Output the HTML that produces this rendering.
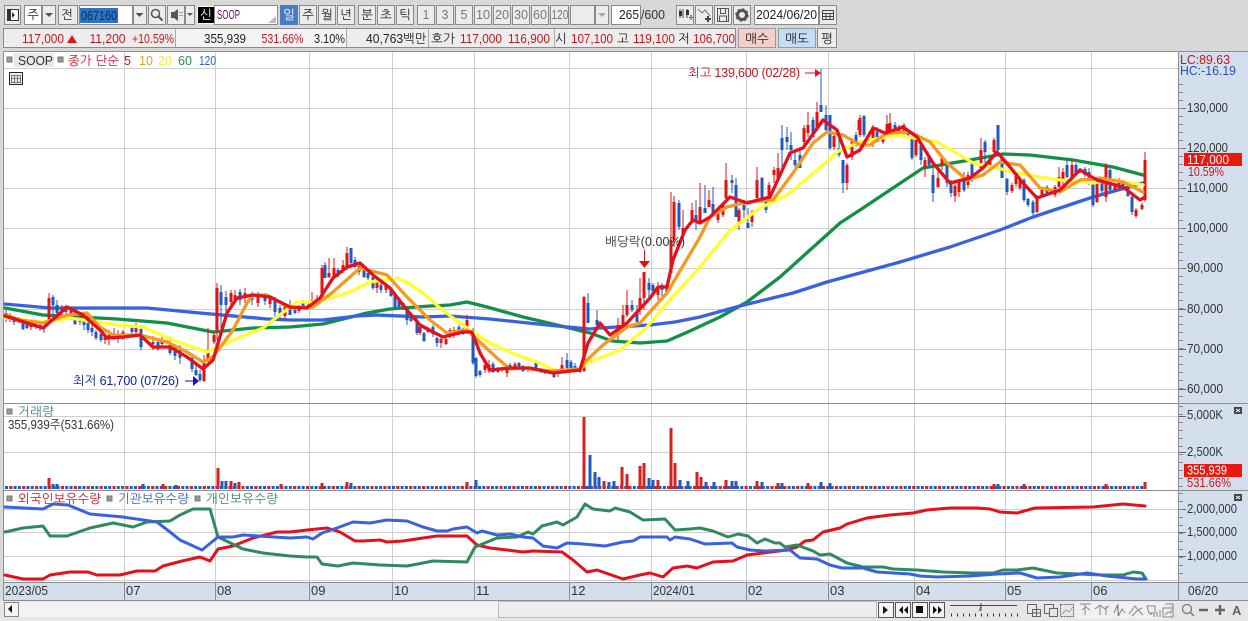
<!DOCTYPE html>
<html><head><meta charset="utf-8"><style>
html,body{margin:0;padding:0;background:#d8d8d8;width:1248px;height:621px;overflow:hidden}
svg{display:block}
text{font-family:"Liberation Sans","NanumGothic",sans-serif;font-size:12.5px;fill:#222}
.c{text-anchor:middle}
.r{fill:#c8161d}.b{fill:#2a50b0}
.ax{fill:#333;font-size:13px}
.btn{fill:#ececec;stroke:#8a8a8a;stroke-width:1}
.ma{fill:none;stroke-linejoin:round;stroke-linecap:round}
</style></head><body>
<svg width="1248" height="621" viewBox="0 0 1248 621" xmlns="http://www.w3.org/2000/svg">
<rect width="1248" height="621" fill="#d8d8d8"/>
<!-- toolbar row 1 -->
<rect class="btn" x="4.500" y="5.500" width="16" height="19"/><rect x="7.500" y="9.500" width="11" height="11" fill="#fff" stroke="#333"/><path d="M7 9h4v12H7zM12 12l3 3-3 3z" fill="#333"/>
<rect x="24.500" y="5.500" width="17" height="19" fill="#fff" stroke="#8a8a8a"/><text class="c" x="33" y="19">주</text>
<rect class="btn" x="42.500" y="5.500" width="13" height="19"/><path d="M45 13h8l-4 4z" fill="#555"/>
<rect class="btn" x="58.500" y="5.500" width="19" height="19"/><text class="c" x="67" y="19">전</text>
<rect x="79.500" y="5.500" width="53" height="19" fill="#fff" stroke="#8a8a8a"/><rect x="80" y="8" width="38" height="15" fill="#2f73c0"/><text x="81" y="20" style="fill:#0b2d60" textLength="36" lengthAdjust="spacingAndGlyphs">067160</text>
<rect class="btn" x="133.500" y="5.500" width="13" height="19"/><path d="M135.500 13h8l-4 4z" fill="#555"/>
<rect class="btn" x="148.500" y="5.500" width="17" height="19"/><circle cx="155.500" cy="13.500" r="4" fill="none" stroke="#555" stroke-width="1.500"/><path d="M158.500 16.500l4 4" stroke="#555" stroke-width="2"/>
<rect class="btn" x="167.500" y="5.500" width="17" height="19"/><path d="M171 12h3l4-3v12l-4-3h-3z" fill="#555"/><path d="M180 12v1M180 15v1M182 12v1M182 15v1" stroke="#555"/>
<rect class="btn" x="185.500" y="5.500" width="9" height="19"/><path d="M187 13h6l-3 3z" fill="#555"/>
<rect x="197" y="6" width="17" height="18" fill="#fff"/><rect x="198" y="7" width="16" height="16" fill="#000"/><text class="c" x="206" y="19" style="fill:#fff">신</text>
<rect x="214.500" y="5.500" width="63" height="19" fill="#fff" stroke="#8a8a8a"/><text x="217" y="19" style="fill:#5a1060" textLength="23" lengthAdjust="spacingAndGlyphs">SOOP</text><path d="M276 23h-8l8-7z" fill="#bbb"/>
<rect x="280" y="5" width="18" height="20" fill="#4a7dc0"/><text class="c" x="289" y="19" style="fill:#fff">일</text>
<g class="btns">
<rect class="btn" x="299.500" y="5.500" width="17" height="19"/><text class="c" x="308" y="19">주</text>
<rect class="btn" x="318.500" y="5.500" width="17" height="19"/><text class="c" x="327" y="19">월</text>
<rect class="btn" x="337.500" y="5.500" width="17" height="19"/><text class="c" x="346" y="19">년</text>
<rect class="btn" x="358.500" y="5.500" width="17" height="19"/><text class="c" x="367" y="19">분</text>
<rect class="btn" x="377.500" y="5.500" width="17" height="19"/><text class="c" x="386" y="19">초</text>
<rect class="btn" x="396.500" y="5.500" width="17" height="19"/><text class="c" x="405" y="19">틱</text>
<rect class="btn" x="417.500" y="5.500" width="17" height="19"/><text class="c" x="426" y="19" style="fill:#777">1</text>
<rect class="btn" x="436.500" y="5.500" width="17" height="19"/><text class="c" x="445" y="19" style="fill:#777">3</text>
<rect class="btn" x="455.500" y="5.500" width="17" height="19"/><text class="c" x="464" y="19" style="fill:#777">5</text>
<rect class="btn" x="474.500" y="5.500" width="17" height="19"/><text x="476" y="19" style="fill:#777" textLength="14" lengthAdjust="spacingAndGlyphs">10</text>
<rect class="btn" x="493.500" y="5.500" width="17" height="19"/><text x="495" y="19" style="fill:#777" textLength="14" lengthAdjust="spacingAndGlyphs">20</text>
<rect class="btn" x="512.500" y="5.500" width="17" height="19"/><text x="514" y="19" style="fill:#777" textLength="14" lengthAdjust="spacingAndGlyphs">30</text>
<rect class="btn" x="531.500" y="5.500" width="17" height="19"/><text x="533" y="19" style="fill:#777" textLength="14" lengthAdjust="spacingAndGlyphs">60</text>
<rect class="btn" x="550.500" y="5.500" width="18" height="19"/><text x="551.500" y="19" style="fill:#777" textLength="17" lengthAdjust="spacingAndGlyphs">120</text>
<rect class="btn" x="570.500" y="5.500" width="24" height="19"/>
<rect class="btn" x="595.500" y="5.500" width="13" height="19"/><path d="M598 13h8l-4 4z" fill="#aaa"/>
</g>
<rect x="611.500" y="5.500" width="29" height="19" fill="#fff" stroke="#8a8a8a"/><text x="619" y="19" textLength="20" lengthAdjust="spacingAndGlyphs">265</text><text x="641" y="19" style="fill:#333" textLength="24" lengthAdjust="spacingAndGlyphs">/600</text>
<rect class="btn" x="676.500" y="5.500" width="17" height="19"/><path d="M680 9v9M683 9v9M687 9v9" stroke="#444"/><path d="M679 11h3v5h-3zM686 10h3v5h-3zM689 17h4v1h-4zM690.500 15v5h1v-5z" fill="#333"/>
<rect class="btn" x="695.500" y="5.500" width="17" height="19"/><path d="M698 9l4 4 3-3 5 6" fill="none" stroke="#777"/><path d="M705 18h6v2h-6zM707 16h2v6h-2z" fill="#444"/>
<rect class="btn" x="714.500" y="5.500" width="17" height="19"/><path d="M717.500 8.500h11v13h-11zM720.500 8.500v5h5v-5M719.500 21v-5h7v5" fill="none" stroke="#555"/>
<rect class="btn" x="733.500" y="5.500" width="17" height="19"/><circle cx="742" cy="15" r="4.500" fill="none" stroke="#555" stroke-width="3"/><circle cx="742" cy="15" r="6" fill="none" stroke="#555" stroke-width="1.500" stroke-dasharray="2.300 2.400"/>
<rect x="754.500" y="5.500" width="64" height="19" fill="#fff" stroke="#8a8a8a"/><text x="756" y="19" textLength="61" lengthAdjust="spacingAndGlyphs">2024/06/20</text>
<rect class="btn" x="819.500" y="5.500" width="17" height="19"/><path d="M822.500 10.500h11v9h-11zM822.500 13.500h11M826 13.500v6M830 13.500v6M822.500 16.500h11" fill="none" stroke="#444"/>
<!-- toolbar row 2 -->
<rect x="3.500" y="28.500" width="732" height="19" fill="#ededed" stroke="#8a8a8a"/>
<rect x="176" y="29" width="171" height="18" fill="#f4f4f4"/><path d="M175.500 29v18M346.500 29v18M428.500 29v18M554.500 29v18" stroke="#aaa"/>
<text x="22" y="43" class="r" textLength="42" lengthAdjust="spacingAndGlyphs">117,000</text><path d="M67 43l5-8 5 8z" fill="#d81818"/>
<text x="89.500" y="43" class="r" textLength="36" lengthAdjust="spacingAndGlyphs">11,200</text><text x="132" y="43" class="r" textLength="42" lengthAdjust="spacingAndGlyphs">+10.59%</text>
<text x="204" y="43" textLength="42" lengthAdjust="spacingAndGlyphs">355,939</text><text x="261.500" y="43" class="r" textLength="42" lengthAdjust="spacingAndGlyphs">531.66%</text><text x="314" y="43" textLength="31" lengthAdjust="spacingAndGlyphs">3.10%</text>
<text x="366" y="43" textLength="60" lengthAdjust="spacingAndGlyphs">40,763백만</text>
<text x="431" y="43" textLength="24" lengthAdjust="spacingAndGlyphs">호가</text><text x="460" y="43" class="r" textLength="42" lengthAdjust="spacingAndGlyphs">117,000</text><text x="508" y="43" class="r" textLength="42" lengthAdjust="spacingAndGlyphs">116,900</text>
<text x="555" y="43">시</text><text x="571" y="43" class="r" textLength="42" lengthAdjust="spacingAndGlyphs">107,100</text><text x="617" y="43">고</text><text x="633" y="43" class="r" textLength="42" lengthAdjust="spacingAndGlyphs">119,100</text><text x="678" y="43">저</text><text x="693" y="43" class="r" textLength="42" lengthAdjust="spacingAndGlyphs">106,700</text>
<rect x="738.500" y="28.500" width="37" height="19" fill="#f4d0cc" stroke="#999"/><text class="c" x="757" y="43">매수</text>
<rect x="778.500" y="28.500" width="37" height="19" fill="#c5dcf5" stroke="#999"/><text class="c" x="797" y="43">매도</text>
<rect class="btn" x="817.500" y="28.500" width="19" height="19"/><text class="c" x="827" y="43">평</text>

<!-- chart frame -->
<rect x="3" y="51" width="1245" height="550" fill="#fff"/>
<rect x="1179" y="52" width="69" height="531" fill="#d4dfee"/>
<rect x="3" y="583" width="1245" height="18" fill="#d4dfee"/>
<!-- grid -->
<path fill="none" stroke="#cfcfcf" d="M4 68.500H1179M4 108.500H1179M4 148.500H1179M4 188.500H1179M4 228.500H1179M4 268.500H1179M4 309.500H1179M4 349.500H1179M4 389.500H1179M4 416.500H1179M4 452.500H1179M4 509.500H1179M4 532.500H1179M4 556.500H1179M4 580.500H1179M124.500 52V583M215.500 52V583M309.500 52V583M392.500 52V583M474.500 52V583M569.500 52V583M651.500 52V583M746.500 52V583M828.500 52V583M914.500 52V583M1005.500 52V583M1091.500 52V583"/>
<path fill="none" stroke="#8e8e8e" d="M3.500 51V601M3 51.500H1248M3 403.500H1248M3 490.500H1248M3 582.500H1248M3 600.500H1248M1178.500 51V601"/>
<path fill="none" stroke="#8e8e8e" d="M124.500 583V601M215.500 583V601M309.500 583V601M392.500 583V601M474.500 583V601M569.500 583V601M651.500 583V601M746.500 583V601M828.500 583V601M914.500 583V601M1005.500 583V601M1091.500 583V601"/>
<!-- axis ticks -->
<path fill="none" stroke="#666" d="M1179 108.500h7M1179 148.500h7M1179 188.500h7M1179 228.500h7M1179 268.500h7M1179 309.500h7M1179 349.500h7M1179 389.500h7M1179 416.500h7M1179 452.500h7M1179 509.500h7M1179 532.500h7M1179 556.500h7"/>
<path fill="none" stroke="#888" stroke-dasharray="1 7" d="M1181 84V403M1181 406V489M1181 493V581" stroke-width="4"/>
<!-- axis labels -->
<text class="ax" x="1187" y="112" textLength="41" lengthAdjust="spacingAndGlyphs">130,000</text><text class="ax" x="1187" y="152" textLength="41" lengthAdjust="spacingAndGlyphs">120,000</text><text class="ax" x="1187" y="192" textLength="41" lengthAdjust="spacingAndGlyphs">110,000</text><text class="ax" x="1187" y="232" textLength="41" lengthAdjust="spacingAndGlyphs">100,000</text><text class="ax" x="1187" y="272" textLength="36" lengthAdjust="spacingAndGlyphs">90,000</text><text class="ax" x="1187" y="313" textLength="36" lengthAdjust="spacingAndGlyphs">80,000</text><text class="ax" x="1187" y="353" textLength="36" lengthAdjust="spacingAndGlyphs">70,000</text><text class="ax" x="1187" y="393" textLength="36" lengthAdjust="spacingAndGlyphs">60,000</text>
<text x="1180" y="64" class="r" textLength="50" lengthAdjust="spacingAndGlyphs">LC:89.63</text><text x="1180" y="75" class="b" textLength="56" lengthAdjust="spacingAndGlyphs">HC:-16.19</text>
<rect x="1184" y="153" width="58" height="13" fill="#e81a10"/><text x="1187" y="164" style="fill:#fff" textLength="42" lengthAdjust="spacingAndGlyphs">117,000</text><text x="1188" y="176" class="r" textLength="36" lengthAdjust="spacingAndGlyphs">10.59%</text>
<text class="ax" x="1187" y="419" textLength="36" lengthAdjust="spacingAndGlyphs">5,000K</text><text class="ax" x="1187" y="456" textLength="36" lengthAdjust="spacingAndGlyphs">2,500K</text>
<rect x="1184" y="464" width="58" height="13" fill="#e81a10"/><text x="1187" y="474.500" style="fill:#fff" textLength="40" lengthAdjust="spacingAndGlyphs">355,939</text><text x="1187" y="487" class="r" textLength="44" lengthAdjust="spacingAndGlyphs">531.66%</text>
<text class="ax" x="1187" y="513" textLength="50" lengthAdjust="spacingAndGlyphs">2,000,000</text><text class="ax" x="1187" y="536" textLength="50" lengthAdjust="spacingAndGlyphs">1,500,000</text><text class="ax" x="1187" y="560" textLength="50" lengthAdjust="spacingAndGlyphs">1,000,000</text>
<rect x="1234" y="407" width="8" height="7" fill="#444"/><path d="M1236 409l4 3M1240 409l-4 3" stroke="#fff"/>
<rect x="1234" y="494" width="8" height="7" fill="#444"/><path d="M1236 496l4 3M1240 496l-4 3" stroke="#fff"/>
<!-- time labels -->
<g style="fill:#333"><text class="ax" x="5" y="595" textLength="43" lengthAdjust="spacingAndGlyphs">2023/05</text><text class="ax" x="126" y="595">07</text><text class="ax" x="217" y="595">08</text><text class="ax" x="311" y="595">09</text><text class="ax" x="394" y="595">10</text><text class="ax" x="476" y="595">11</text><text class="ax" x="571" y="595">12</text><text class="ax" x="653" y="595" textLength="42" lengthAdjust="spacingAndGlyphs">2024/01</text><text class="ax" x="748" y="595">02</text><text class="ax" x="830" y="595">03</text><text class="ax" x="916" y="595">04</text><text class="ax" x="1007" y="595">05</text><text class="ax" x="1093" y="595">06</text><text class="ax" x="1188" y="595" textLength="30" lengthAdjust="spacingAndGlyphs">06/20</text></g>
<!-- legend -->
<rect x="7" y="57" width="5" height="5" fill="#999" stroke="#777"/><rect x="14" y="53" width="40" height="14" fill="#e9e9e9"/><text x="18" y="65" style="fill:#333" textLength="35" lengthAdjust="spacingAndGlyphs">SOOP</text><rect x="58" y="57" width="5" height="5" fill="#999" stroke="#777"/>
<text x="68" y="65" style="fill:#d01020" textLength="51">종가 단순</text><text x="124" y="65" style="fill:#d01020">5</text><text x="139" y="65" style="fill:#e0a030">10</text><text x="158" y="65" style="fill:#f0f040">20</text><text x="178" y="65" style="fill:#2f8a50">60</text><text x="199" y="65" style="fill:#3060c0" textLength="17" lengthAdjust="spacingAndGlyphs">120</text>
<rect x="9.500" y="72.500" width="13" height="12" fill="#eee" stroke="#222"/><path d="M11.500 75.500h9v7h-9zM14.500 75.500v7M17.500 75.500v7M11.500 78.500h9" fill="none" stroke="#777"/>
<rect x="7" y="409" width="5" height="5" fill="#999" stroke="#777"/><text x="18" y="416" style="fill:#2f8a80" textLength="36">거래량</text><text x="8" y="429" style="fill:#333" textLength="106" lengthAdjust="spacingAndGlyphs">355,939주(531.66%)</text>
<rect x="7" y="496" width="5" height="5" fill="#999" stroke="#777"/><text x="18" y="503" style="fill:#d01020" textLength="83">외국인보유수량</text><rect x="107" y="496" width="5" height="5" fill="#999" stroke="#777"/><text x="118" y="503" style="fill:#3060c0" textLength="71">기관보유수량</text><rect x="195" y="496" width="5" height="5" fill="#999" stroke="#777"/><text x="206" y="503" style="fill:#2f8a60" textLength="72">개인보유수량</text>

<!-- MA 120/60 under candles -->
<polyline class="ma" stroke="#129048" stroke-width="3.300" points="5,308 43,315 117,319 167,323 213,332 253,328 290,327 323,324 367,313 390,309 430,306 450,305 467,302 487,307 523,317 557,325 590,333 612,341 640,343 667,341 690,331 720,317 747,302 780,277 810,250 840,223 860,210 893,188 923,168 970,160 1003,154 1030,155 1073,160 1113,167 1143,175"/>
<polyline class="ma" stroke="#3a62e0" stroke-width="3.300" points="5,304 50,308 100,308 147,308 200,313 267,319 290,320 323,320 357,316 377,315 423,317 450,316 490,319 557,326 590,329 600,328 650,325 675,322 700,317 740,306 793,293 827,282 860,273 900,262 950,247 1000,230 1033,217 1093,197 1143,183"/>
<!-- candles -->
<path fill="none" stroke="#e01414" stroke-width="1" d="M10 313V322M19 317V323M31 322V330M49 293V323M62 305V315M71 307V320M105 335V344M109 330V345M114 328V340M123 330V340M136 323V337M153 336V350M162 335V347M204 355V382M208 328V362M214 332V344M217 283V340M231 290V305M235 290V302M245 288V303M258 292V307M270 296V308M285 303V320M299 305V313M308 302V309M312 292V308M317 295V303M322 265V298M329 258V278M334 258V278M343 260V273M347 247V270M359 263V275M377 280V293M386 283V293M403 302V310M420 325V335M441 337V348M446 337V345M450 328V338M454 327V338M467 315V333M485 362V373M489 360V373M502 367V372M507 367V377M515 362V368M528 367V372M532 367V371M558 372V377M562 357V373M584 296V372M618 318V340M623 305V330M627 290V317M640 278V315M644 272V310M658 282V300M671 192V273M674 196V247M683 210V237M692 203V223M700 183V220M709 190V207M718 208V223M723 202V217M726 163V200M739 208V230M752 210V227M757 167V200M769 182V203M774 167V183M778 153V183M804 125V147M808 112V137M817 102V130M834 133V150M847 163V190M852 138V160M859 118V133M860 115V137M873 125V147M883 133V144M887 115V138M890 113V138M899 125V133M904 123V135M916 137V157M925 157V177M938 165V188M942 157V170M955 183V202M959 180V197M968 172V188M981 138V170M990 157V170M994 138V157M1012 183V193M1016 173V187M1020 177V190M1037 195V213M1042 188V198M1055 185V197M1059 167V188M1063 168V185M1072 160V182M1080 168V173M1097 178V203M1106 163V202M1115 183V192M1119 178V190M1136 208V218M1142 203V210M1145 152V202"/>
<path fill="none" stroke="#e01414" stroke-width="3" d="M10 315V318M19 319V320M31 325V327M49 298V323M62 309V312M71 310V316M105 337V340M109 335V338M114 334V337M123 332V337M136 327V332M153 342V344M162 340V344M204 360V381M208 350V360M214 335V342M217 288V330M231 293V302M235 295V300M245 293V297M258 294V303M270 297V304M285 305V316M299 307V311M308 305V308M312 300V303M322 268V297M329 273V277M334 268V277M343 265V270M347 253V268M359 266V272M377 282V288M386 285V290M403 303V307M420 327V333M441 339V343M446 339V344M450 330V337M454 330V334M467 320V330M485 365V370M489 365V371M507 369V373M515 364V367M562 365V372M584 297V371M618 325V335M623 315V327M627 305V315M640 298V310M644 272V298M658 288V295M671 240V273M674 202V240M683 228V235M692 210V220M700 207V223M709 200V207M718 210V220M723 205V215M726 180V198M739 210V222M752 212V222M757 180V198M769 185V200M774 170V175M778 168V180M804 128V142M808 125V133M817 112V128M834 136V147M847 165V183M852 140V157M859 120V130M860 118V135M873 127V140M883 135V142M887 124V138M890 123V133M899 127V132M904 125V132M916 139V155M925 160V168M938 178V187M942 158V165M955 186V196M959 182V192M968 175V185M981 150V168M990 160V168M994 140V152M1012 185V191M1016 176V184M1020 180V188M1037 197V212M1042 190V196M1055 187V195M1059 177V187M1063 172V182M1072 165V180M1097 180V202M1106 165V197M1115 185V190M1119 180V188M1136 210V216M1142 205V209M1145 160V200"/>
<path fill="none" stroke="#1f5ac0" stroke-width="1" d="M6 310V322M14 316V325M23 319V330M27 320V329M36 323V329M40 324V331M44 325V333M53 295V318M57 300V317M66 305V318M75 310V325M80 316V325M84 320V330M88 322V333M92 325V336M96 330V340M101 332V342M118 330V343M132 325V334M141 325V350M158 340V351M170 340V355M175 345V360M180 345V364M192 355V372M196 365V376M200 370V382M221 285V330M226 291V315M240 289V305M252 292V305M265 293V305M275 297V320M280 305V318M290 300V315M295 308V314M303 300V309M325 262V278M338 268V277M351 248V268M355 257V268M364 267V278M368 272V280M373 275V290M381 283V293M391 288V297M395 293V308M399 297V308M407 308V325M411 315V322M417 318V335M424 332V342M428 327V333M433 325V337M437 337V347M459 325V335M463 328V335M473 328V365M476 357V378M480 370V377M493 362V373M498 367V373M510 363V370M519 362V368M523 365V372M536 362V371M541 368V373M545 370V374M550 370V373M554 372V378M567 353V370M571 360V370M575 363V372M580 365V373M588 293V323M597 310V330M632 300V312M637 305V322M649 278V298M653 283V295M662 283V300M667 280V295M679 200V230M696 200V230M705 185V213M713 187V215M732 175V193M736 178V217M744 200V220M748 208V228M762 177V203M766 197V213M782 125V167M787 127V150M791 132V160M795 150V167M800 147V168M813 117V137M821 69V112M826 105V132M830 115V150M839 137V157M843 160V193M856 132V147M864 115V137M877 127V142M895 122V137M908 130V138M912 137V160M921 142V165M929 155V168M933 167V202M947 162V187M951 180V197M964 172V192M972 162V182M985 140V163M998 125V153M1002 157V178M1007 178V195M1024 178V202M1028 198V207M1033 200V215M1047 185V195M1067 158V178M1076 163V175M1085 167V177M1089 168V185M1093 180V207M1102 180V193M1110 168V193M1123 182V190M1128 185V197M1132 195V215"/>
<path fill="none" stroke="#1f5ac0" stroke-width="3" d="M6 313V318M14 317V322M23 320V329M27 322V328M36 325V327M40 325V328M44 326V329M53 297V305M57 305V313M66 306V312M75 313V324M80 318V322M84 321V325M88 323V330M92 328V332M96 332V338M101 334V340M118 335V338M132 328V332M141 329V347M158 342V349M170 345V353M175 347V356M180 350V358M192 358V369M196 370V375M200 374V380M221 292V305M226 297V305M240 292V300M252 295V300M265 296V301M275 300V312M280 308V315M290 305V315M295 310V313M303 303V307M325 265V278M338 270V276M351 248V263M355 260V267M364 269V277M368 273V278M373 277V288M381 285V290M391 290V296M395 295V307M399 298V307M407 310V320M411 317V321M417 320V333M424 333V341M428 328V332M433 327V334M437 338V343M459 327V333M463 329V334M473 330V363M476 358V376M480 371V375M493 364V372M498 368V372M510 365V369M519 363V367M523 366V371M536 363V370M541 369V372M545 371V373M550 371V373M554 373V377M567 360V368M571 362V369M575 366V370M580 368V372M588 303V323M597 320V325M632 305V310M637 312V322M649 283V290M653 285V291M662 285V290M667 284V292M679 203V227M696 215V222M705 208V213M713 204V215M732 180V183M736 185V217M744 205V210M748 223V228M762 178V198M766 200V210M782 138V150M787 137V142M791 145V150M795 160V165M800 155V168M813 120V137M821 105V112M826 115V130M830 115V148M839 148V155M843 160V183M856 135V145M864 116V135M877 132V142M895 125V135M908 131V136M912 138V158M921 145V160M929 157V165M933 175V193M947 165V183M951 182V193M964 180V190M972 163V178M985 142V152M998 125V150M1002 158V178M1007 179V192M1024 180V200M1028 199V205M1033 202V213M1047 187V193M1067 165V177M1076 165V174M1085 169V175M1089 172V184M1093 183V205M1102 182V191M1110 170V190M1123 183V189M1128 187V196M1132 197V212"/>
<!-- MA 5/10/20 -->
<polyline class="ma" stroke="#ffff30" stroke-width="3.300" points="5,318 43,322 70,318 117,325 143,327 173,340 207,352 233,340 263,328 290,307 297,302 313,302 330,298 350,292 370,282 397,278 407,282 423,293 440,308 453,318 470,330 490,343 517,355 537,362 557,371 580,369 587,363 620,350 647,327 667,303 700,267 730,230 760,208 787,195 817,170 840,150 860,142 897,135 937,142 960,155 973,163 997,168 1027,175 1060,180 1093,183 1113,180 1143,185"/>
<polyline class="ma" stroke="#f59a20" stroke-width="3.300" points="5,315 20,320 43,323 67,315 87,313 100,327 113,335 140,335 167,342 187,352 203,362 213,357 233,330 247,303 253,295 267,295 290,308 313,307 333,292 360,268 387,275 407,297 430,320 447,333 467,330 483,345 497,358 510,369 523,368 550,371 580,369 587,360 603,345 627,327 640,323 667,293 700,237 710,217 727,207 747,202 773,200 793,173 813,143 827,132 843,135 860,145 870,145 887,133 910,132 930,142 947,163 967,180 983,175 1000,162 1020,165 1040,188 1060,192 1080,180 1100,178 1123,182 1143,192"/>
<polyline class="ma" stroke="#e4101c" stroke-width="3.300" points="5,316 27,323 43,328 50,322 67,307 83,315 100,330 107,338 123,337 140,335 153,347 170,347 187,357 203,369 213,360 227,313 237,298 253,295 270,297 290,307 307,308 320,298 333,278 347,267 360,263 373,275 390,288 407,310 420,325 433,332 443,337 463,332 472,332 480,353 490,370 510,368 530,368 553,373 580,370 588,343 600,323 610,335 627,323 650,298 658,287 667,287 673,260 685,230 693,220 700,223 710,217 730,197 747,203 770,197 790,153 803,148 823,120 837,130 847,157 860,150 873,128 885,133 903,127 917,137 933,163 950,183 970,178 983,168 997,152 1010,167 1023,183 1037,198 1060,190 1080,170 1097,180 1123,187 1140,200 1145,197"/>
<!-- annotations -->
<text x="688" y="77" class="r" textLength="112">최고 139,600 (02/28)</text><path d="M805 73h10" stroke="#e01018"/><path d="M815 69l6 4-6 4z" fill="#e01018"/>
<text x="73" y="385" style="fill:#10209a" textLength="106">최저 61,700 (07/26)</text><path d="M185 381h10" stroke="#1010c0"/><path d="M193 376l6 5-6 5z" fill="#1010c0"/>
<text x="605" y="246" style="fill:#333" textLength="80">배당락(0.00%)</text><path d="M644.500 250v12" stroke="#e01018"/><path d="M639 261h11l-5.500 7z" fill="#e01018"/>
<!-- volume -->
<path stroke="#1f5ac0" stroke-width="3" stroke-dasharray="3 1.300" d="M5 487.500H1146" fill="none"/>
<path stroke="#d8201c" stroke-width="3" stroke-dasharray="3 9.900" stroke-dashoffset="-4.300" d="M5 487.500H1146" fill="none"/>
<path fill="none" stroke="#d8201c" stroke-width="3" d="M49 478V489M218 468V489M231 481V489M239 482V489M163 484V489M584 417V489M604 481V489M622 467V489M627 474V489M640 466V489M644 463V489M658 480V489M671 428V489M675 463V489M697 472V489M701 477V489M757 481V489M778 483V489M808 483V489M281 484V489M322 483V489M347 482V489M467 482V489M726 480V489M1145 482V489M1106 484V489M994 484V489M1024 484V489"/>
<path fill="none" stroke="#1f5ac0" stroke-width="3" d="M53 484V489M57 484V489M143 484V489M176 485V489M222 481V489M226 481V489M235 483V489M590 455V489M595 472V489M599 477V489M609 482V489M614 481V489M649 478V489M653 480V489M680 480V489M688 481V489M706 482V489M714 482V489M732 481V489M736 481V489M762 482V489M782 483V489M821 482V489M351 483V489M476 480V489M830 483V489M998 484V489"/>
<!-- indicator lines -->
<polyline class="ma" stroke="#e4101c" stroke-width="3" points="5,575 23,579 43,579 50,575 70,572 88,572 97,575 120,575 137,571 155,571 163,566 182,561 200,557 210,561 218,549 233,546 253,538 277,532 290,532 307,530 327,528 340,532 355,541 363,541 380,540 387,542 403,541 423,538 437,536 467,536 477,545 490,548 507,550 523,552 533,551 562,552 573,560 587,572 597,570 623,579 640,575 650,573 663,577 673,568 687,566 697,568 713,562 733,561 747,555 763,553 787,550 797,547 805,541 813,540 823,532 840,528 847,524 867,518 890,515 913,513 927,510 950,508 977,508 990,509 1000,512 1017,513 1035,508 1093,507 1123,504 1145,506"/>
<polyline class="ma" stroke="#2f8a60" stroke-width="3" points="5,532 23,528 43,526 50,536 67,536 90,528 113,523 133,527 147,522 170,521 180,515 193,509 210,509 218,537 243,549 263,553 290,556 307,557 317,557 322,564 338,566 353,563 380,565 407,566 423,563 433,561 467,562 475,547 497,538 517,537 528,532 533,534 542,526 557,522 563,525 577,517 585,504 593,509 610,511 615,508 630,512 643,520 665,519 675,530 690,529 700,528 713,531 728,537 738,534 748,536 757,543 765,539 775,543 780,543 785,547 797,545 805,548 813,551 820,555 830,554 847,563 863,567 883,567 893,569 917,570 943,572 973,573 993,573 1003,570 1017,570 1033,568 1057,573 1100,575 1123,575 1133,572 1142,573 1146,579"/>
<polyline class="ma" stroke="#3a62e0" stroke-width="3" points="5,507 43,509 53,504 68,505 90,514 123,517 157,522 170,532 180,540 202,550 218,537 233,537 243,535 290,538 307,537 313,539 322,533 337,528 353,522 370,523 387,520 407,521 423,527 437,531 447,531 453,529 467,527 477,533 482,531 497,535 510,534 523,537 533,538 543,546 557,548 567,543 583,544 605,546 623,542 633,541 640,537 667,537 670,540 675,537 690,539 705,544 732,543 737,547 750,550 765,551 790,550 800,558 817,559 830,565 842,568 863,568 877,572 910,574 920,576 937,577 970,576 997,574 1020,573 1037,578 1060,577 1087,573 1107,576 1137,579 1146,579"/>
<!-- bottom bar -->
<rect x="0" y="601" width="1248" height="20" fill="#e6e6e6"/>
<rect x="19" y="602" width="859" height="15" fill="#f3f3f3"/>
<rect x="498.500" y="601.500" width="378" height="16" fill="#eee" stroke="#bbb"/>
<rect x="4.500" y="602.500" width="14" height="14" fill="#f4f4f4" stroke="#888"/><path d="M12 605v8l-4-4z" fill="#111"/>
<rect x="878.500" y="602.500" width="15" height="15" fill="#f4f4f4" stroke="#555"/><path d="M883 606v8l5-4z" fill="#111"/>
<rect x="895.500" y="602.500" width="15" height="15" fill="#f4f4f4" stroke="#555"/><path d="M903 606v8l-4-4zM908 606v8l-4-4z" fill="#111"/>
<rect x="912.500" y="602.500" width="15" height="15" fill="#f4f4f4" stroke="#555"/><rect x="916" y="606" width="7" height="7" fill="#111"/>
<rect x="929.500" y="602.500" width="15" height="15" fill="#f4f4f4" stroke="#555"/><path d="M933 606v8l4-4zM938 606v8l4-4z" fill="#111"/>
<path d="M950 605.500h67M981 603v8" stroke="#444" fill="none"/><path d="M980 606l-1 5h3z" fill="#777"/><path d="M951 615h67" stroke="#333" stroke-dasharray="1 5" stroke-width="3" fill="none"/>
<g fill="none" stroke="#666"><rect x="1027.500" y="604.500" width="9" height="9"/><rect x="1032.500" y="609.500" width="8" height="7" fill="#e6e6e6"/><path d="M1036.500 609.500v7M1032.500 613h8"/><rect x="1044.500" y="604.500" width="9" height="9"/><rect x="1049.500" y="608.500" width="8" height="8" fill="#e6e6e6"/><rect x="1060.500" y="604.500" width="13" height="12" stroke-dasharray="2 1"/><path d="M1062 614l4-4 3 2 4-5" stroke="#999"/></g>
<rect x="1075" y="602" width="95" height="17" fill="#f0f0f0"/>
<g fill="none" stroke="#888"><path d="M1080 604h11M1085 604v11M1082 610l4-3 4 3"/><path d="M1095 609l5-4 5 4 4-3M1100 606v9M1106 606v9"/><path d="M1114 613l3-7 2 9 3-6 3 4M1118 604v12"/><path d="M1129 614l6-8 3 4 4-2M1132 616l6-6 5 5"/><path d="M1147 606h8v7h-6zM1150 614h2M1154 614v3M1157 612v5M1160 610v7"/><path d="M1165 604h8v4M1163 608h10v9h-10zM1165 615l3-3 2 1 2-3"/></g>
<circle cx="1187" cy="609" r="4.500" fill="none" stroke="#777" stroke-width="1.300"/><path d="M1190 612l4 4" stroke="#777" stroke-width="1.500"/>
<path d="M1199 610h9" stroke="#666" stroke-width="2.500"/><path d="M1215 610h10M1220 605v10" stroke="#666" stroke-width="2.500"/>
<text x="1232" y="615" style="fill:#666;font-weight:bold;font-size:13px">A</text>
</svg>
</body></html>
